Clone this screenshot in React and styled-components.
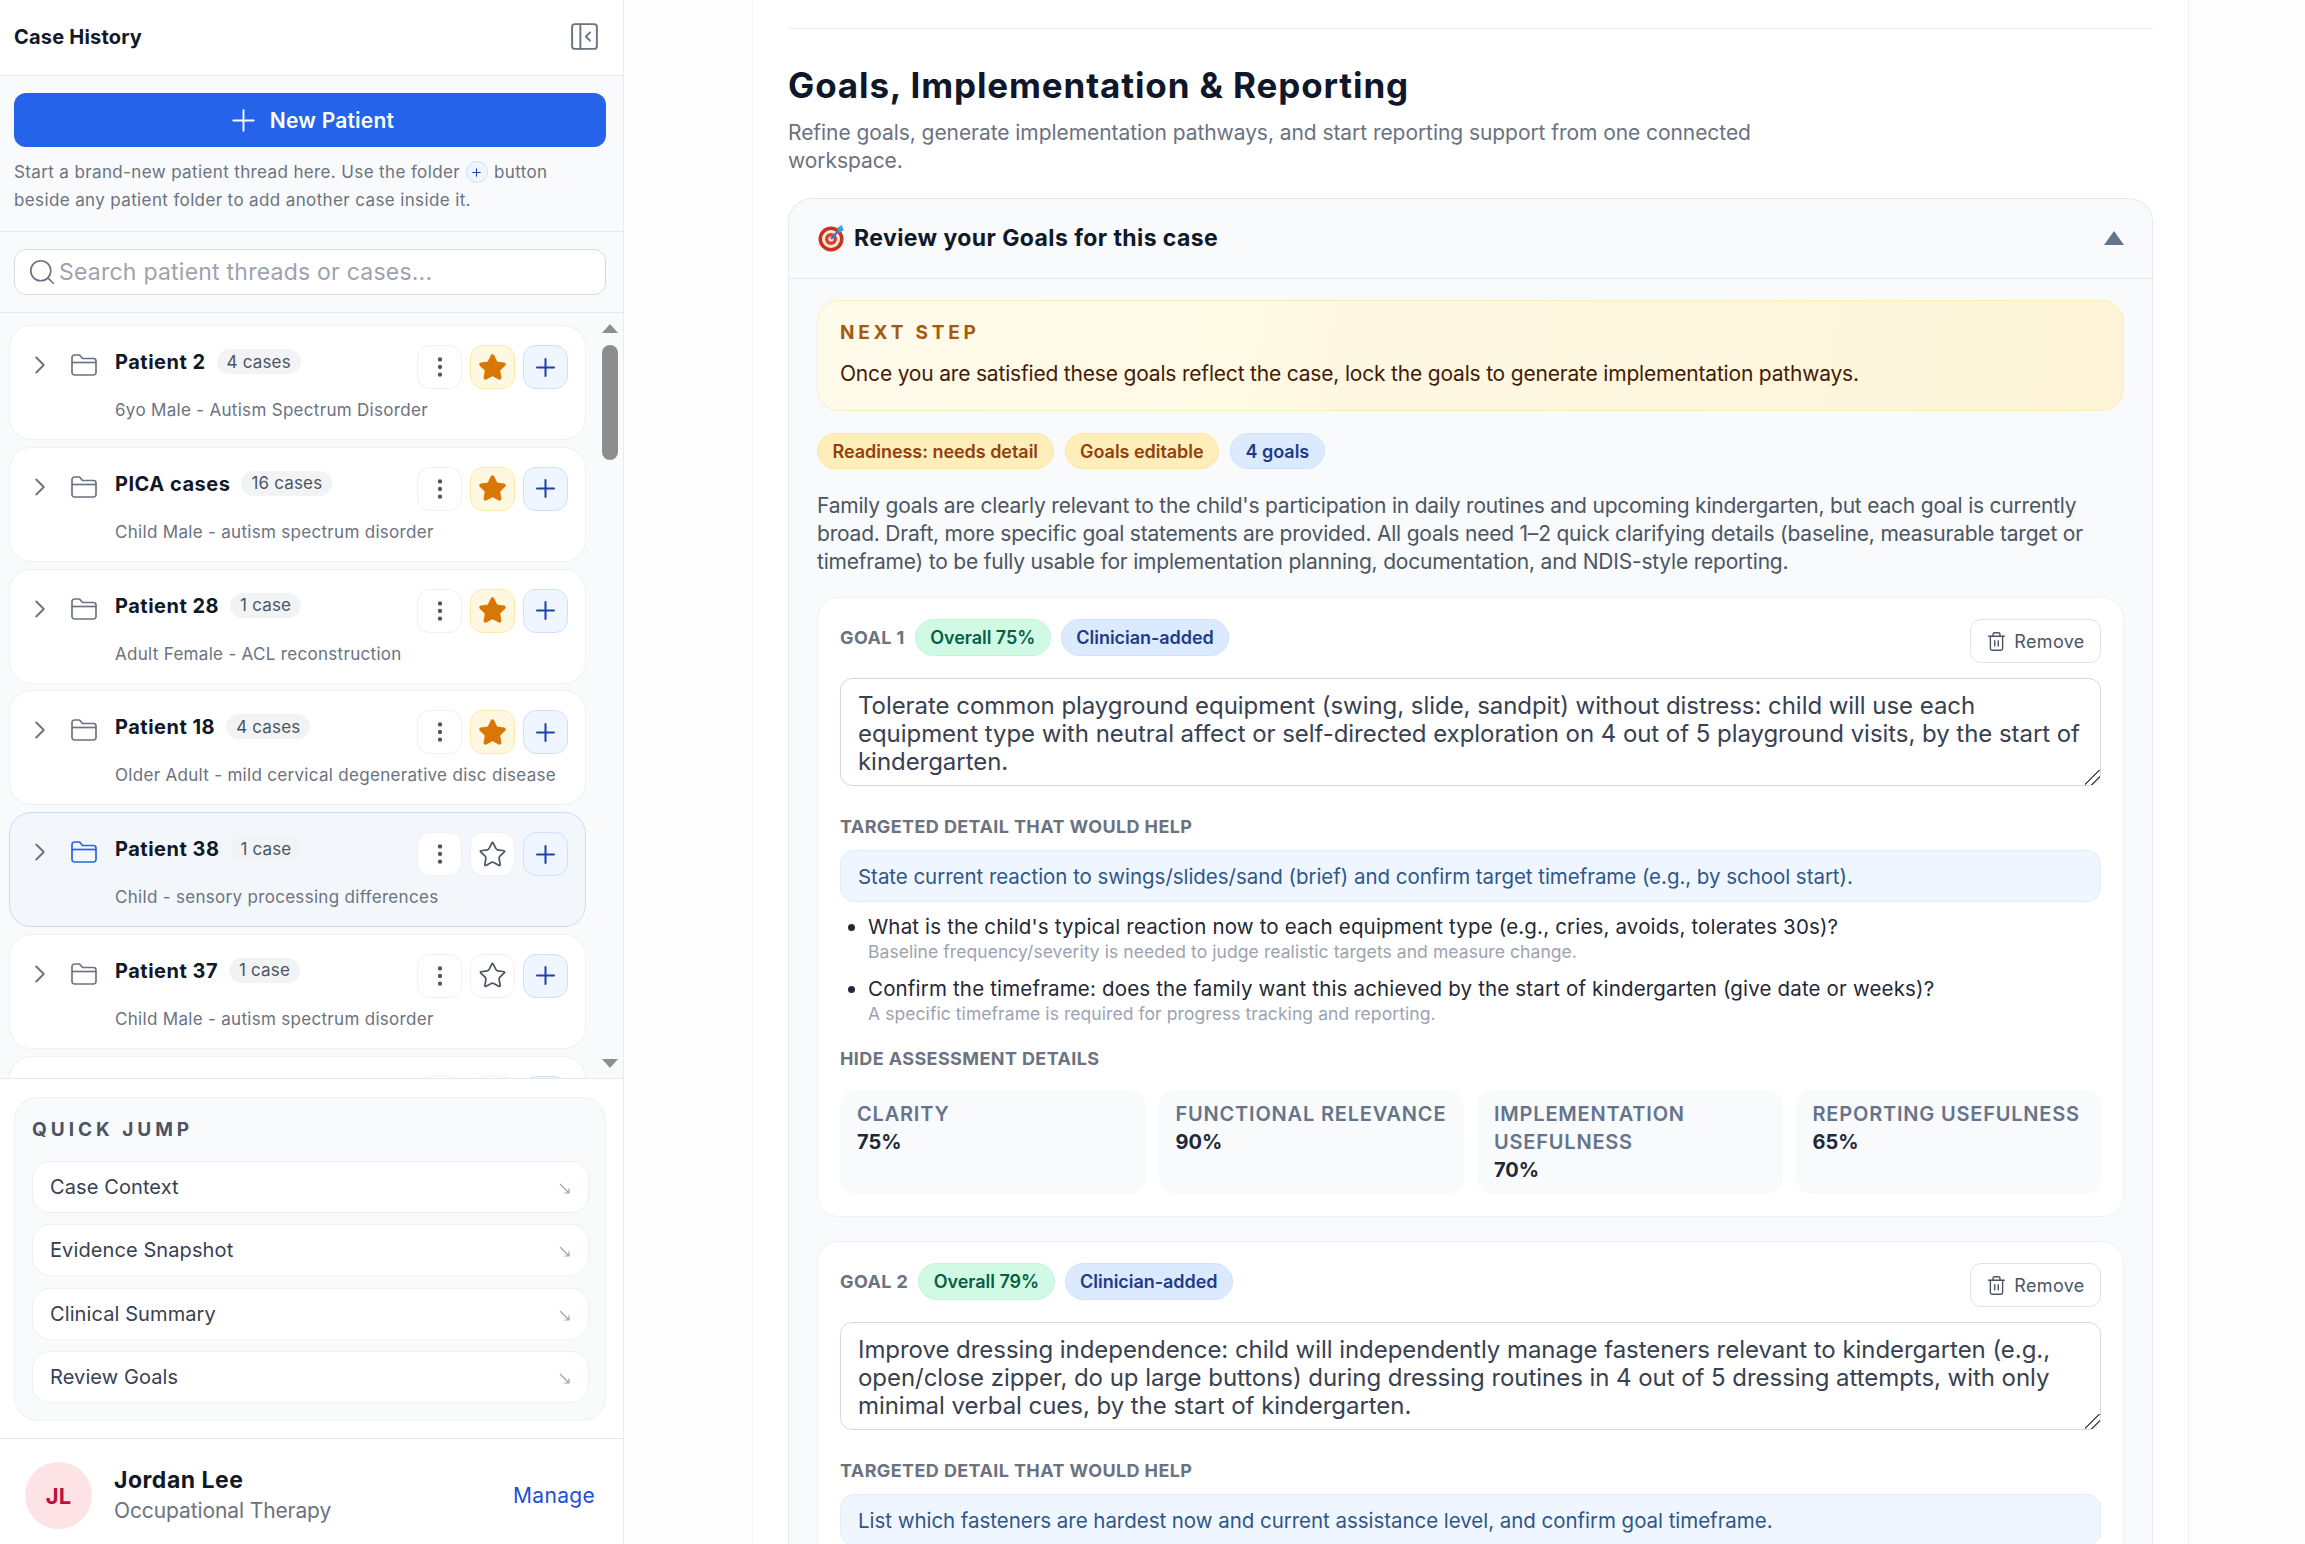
import React from "react";
import styled, { createGlobalStyle } from "styled-components";
import { ChevronRight, EllipsisVertical, PanelLeftClose, Plus, Search, Star, Trash2 } from "lucide-react";

const GlobalStyle = createGlobalStyle`
  * { box-sizing: border-box; }
  html, body { margin: 0; height: 100%; overflow: hidden; }
  body {
    font-family: Inter, "Liberation Sans", sans-serif;
    background: #fdfdfe;
    color: #111827;
  }
`;

const Shell = styled.div`
  display: flex;
  height: 100vh;
  overflow: hidden;
`;

/* sidebar */
const Sidebar = styled.aside`
  width: 624px;
  flex: none;
  display: flex;
  flex-direction: column;
  background: #fff;
  border-right: 1px solid #e8ebef;
`;

const SideHeader = styled.header`
  height: 76px;
  flex: none;
  display: flex;
  align-items: center;
  justify-content: space-between;
  padding: 0 22px 2px 14px;
  border-bottom: 1px solid #e5e7eb;
  color: #6b7280;
`;

const SideTitle = styled.h2`
  margin: 0;
  font-size: 20px;
  font-weight: 700;
  letter-spacing: 0.01em;
  color: #111827;
`;

const SideBlock = styled.div`
  flex: none;
  padding: 17px 17px 17px 14px;
  background: #f8fafc;
  border-bottom: 1px solid #e5e7eb;
`;

const NewButton = styled.button`
  width: 100%;
  height: 54px;
  display: flex;
  align-items: center;
  justify-content: center;
  gap: 9px;
  border: 0;
  border-radius: 12px;
  background: #2563eb;
  color: #fff;
  font: 600 21px Inter, sans-serif;
  letter-spacing: 0.01em;
`;

const Hint = styled.div`
  margin: 11px 0 0;
  font-size: 17px;
  letter-spacing: 0.022em;
  color: #6b7280;
`;

const HintLine = styled.div`
  height: 28px;
  display: flex;
  align-items: center;
  white-space: nowrap;
`;

const HintChip = styled.span`
  display: inline-flex;
  align-items: center;
  justify-content: center;
  width: 22px;
  height: 22px;
  margin: 0 6px;
  flex: none;
  border-radius: 50%;
  background: #eff6ff;
  border: 1px solid #cfe0f7;
  color: #1e40af;
`;

const SearchBox = styled.label`
  height: 46px;
  display: flex;
  align-items: center;
  padding: 0 12px;
  background: #fff;
  border: 1px solid #d7dce3;
  border-radius: 12px;
  color: #6b7280;
`;

const SearchInput = styled.input`
  flex: 1;
  min-width: 0;
  padding: 0 0 0 2px;
  border: 0;
  outline: 0;
  background: none;
  font: 400 23px Inter, sans-serif;
  letter-spacing: 0.01em;
  &::placeholder { color: #9ca3af; opacity: 1; }
`;

const ListArea = styled.div`
  flex: 1;
  min-height: 0;
  display: flex;
  background: #f8fafc;
  border-bottom: 1px solid #e5e7eb;
  overflow: hidden;
`;

const CardColumn = styled.div`
  width: 586px;
  flex: none;
  padding: 12px 0 0 9px;
  display: flex;
  flex-direction: column;
  gap: 6.8px;
  overflow: hidden;
`;

const PatientCard = styled.div`
  height: 115px;
  flex: none;
  padding: 19px 17px 0 15px;
  border-radius: 22px;
  background: ${(p) => (p.$active ? "#f3f7fc" : "#fff")};
  border: 1px solid ${(p) => (p.$active ? "#c9dcf2" : "#edf0f4")};
`;

const CardTop = styled.div`
  display: flex;
  align-items: flex-start;
`;

const Chevron = styled(ChevronRight)`
  flex: none;
  margin-top: 5px;
  color: #6b7280;
`;

const FolderMark = styled.svg`
  flex: none;
  margin: 9px 0 0 16px;
  color: ${(p) => (p.$active ? "#2563eb" : "#6b7280")};
`;

const PatientName = styled.span`
  margin: 2px 0 0 18px;
  font-size: 20px;
  line-height: 30px;
  font-weight: 700;
  letter-spacing: 0.025em;
  color: #111827;
`;

const CountBadge = styled.span`
  margin: 4px 0 0 11px;
  height: 25px;
  padding: 0 10px;
  display: inline-flex;
  align-items: center;
  border-radius: 999px;
  background: #f1f3f5;
  font-size: 17px;
  letter-spacing: 0.01em;
  color: #4b5563;
`;

const Actions = styled.div`
  margin-left: auto;
  display: flex;
  gap: 8px;
`;

const IconButton = styled.button`
  width: 45px;
  height: 44px;
  padding: 0;
  display: flex;
  align-items: center;
  justify-content: center;
  border-radius: 13px;
  background: ${(p) => (p.$tone === "star" ? "#fff8e1" : p.$tone === "plus" ? "#eff6ff" : "#fff")};
  border: 1px solid ${(p) => (p.$tone === "star" ? "#fde9a9" : p.$tone === "plus" ? "#cfe0f7" : "#eef0f3")};
  color: ${(p) => (p.$tone === "plus" ? "#1e40af" : p.$tone === "star" ? "#d97706" : "#4b5563")};
`;

const Subline = styled.div`
  margin: 9px 0 0 90px;
  font-size: 17px;
  line-height: 24px;
  letter-spacing: 0.018em;
  color: #6b7280;
  white-space: nowrap;
`;

const ScrollTrack = styled.div`
  width: 17px;
  margin-left: 15px;
  padding-top: 11px;
  display: flex;
  flex-direction: column;
  align-items: center;
`;

const ScrollUp = styled.span`
  width: 0;
  height: 0;
  border-left: 8px solid transparent;
  border-right: 8px solid transparent;
  border-bottom: 9px solid #8d8d8d;
`;

const ScrollThumb = styled.span`
  width: 16px;
  height: 115px;
  margin-top: 12px;
  border-radius: 8px;
  background: #8d8d8d;
`;

const ScrollDown = styled.span`
  width: 0;
  height: 0;
  margin-top: auto;
  margin-bottom: 10px;
  border-left: 8px solid transparent;
  border-right: 8px solid transparent;
  border-top: 9px solid #8d8d8d;
`;

const JumpWrap = styled.div`
  flex: none;
  padding: 18px 17px 17px 14px;
  border-bottom: 1px solid #e5e7eb;
`;

const JumpPanel = styled.nav`
  padding: 19px 16px 17px 17px;
  background: #f8fafc;
  border: 1px solid #edf0f4;
  border-radius: 24px;
`;

const JumpTitle = styled.div`
  font-size: 19px;
  line-height: 26px;
  font-weight: 700;
  letter-spacing: 0.21em;
  color: #4b5563;
  margin-bottom: 18px;
`;

const JumpList = styled.div`
  display: flex;
  flex-direction: column;
  gap: 11.5px;
`;

const JumpItem = styled.a`
  height: 52px;
  display: flex;
  align-items: center;
  justify-content: space-between;
  padding: 0 17px;
  background: #fff;
  border: 1px solid #edf0f4;
  border-radius: 18px;
  font-size: 20px;
  letter-spacing: 0.005em;
  color: #374151;
`;

const JumpArrow = styled.svg`
  flex: none;
  margin: 3px 1px 0 0;
  color: #9ca3af;
`;

const Account = styled.footer`
  height: 105px;
  flex: none;
  display: flex;
  align-items: center;
  padding: 8px 28px 0 25px;
`;

const Avatar = styled.div`
  width: 67px;
  height: 67px;
  flex: none;
  display: flex;
  align-items: center;
  justify-content: center;
  border-radius: 50%;
  background: #fde2e6;
  color: #be123c;
  font-size: 22px;
  font-weight: 700;
`;

const AccountText = styled.div`
  margin-left: 22px;
`;

const AccountName = styled.div`
  font-size: 23px;
  line-height: 30px;
  font-weight: 700;
  letter-spacing: 0.022em;
  color: #111827;
`;

const AccountRole = styled.div`
  margin-top: 1px;
  font-size: 21px;
  line-height: 30px;
  letter-spacing: -0.005em;
  color: #6b7280;
`;

const ManageLink = styled.a`
  margin-left: auto;
  font-size: 21px;
  letter-spacing: 0.015em;
  color: #1d4ed8;
`;

/* workspace */
const Workspace = styled.main`
  flex: 1;
  min-width: 0;
  padding: 0 116px 0 128px;
  overflow: hidden;
`;

const Panel = styled.div`
  min-height: 100%;
  padding: 28px 35px 0;
  background: #fff;
  border-left: 1px solid #f1f3f6;
  border-right: 1px solid #f1f3f6;
`;

const TopSection = styled.section`
  border-top: 1px solid #e8ebef;
  padding-top: 36px;
`;

const Heading = styled.h1`
  margin: 0;
  font-size: 35px;
  line-height: 40px;
  font-weight: 700;
  letter-spacing: 0.025em;
  color: #0f172a;
`;

const Intro = styled.p`
  margin: 14px 0 23px;
  max-width: 1010px;
  font-size: 21px;
  line-height: 28px;
  letter-spacing: -0.003em;
  color: #6b7280;
`;

const Accordion = styled.section`
  background: #f8fafc;
  border: 1px solid #e6eaf0;
  border-bottom: 0;
  border-radius: 24px 24px 0 0;
`;

const AccordionHead = styled.div`
  height: 80px;
  display: flex;
  align-items: center;
  gap: 9px;
  padding: 0 28px 2px 29px;
  border-bottom: 1px solid #e6eaf0;
`;

const AccordionTitle = styled.h3`
  margin: 0;
  font-size: 23px;
  font-weight: 700;
  color: #111827;
  letter-spacing: 0.018em;
`;

const CollapseMark = styled.span`
  margin-left: auto;
  width: 0;
  height: 0;
  border-left: 10px solid transparent;
  border-right: 10px solid transparent;
  border-bottom: 14px solid #64748b;
`;

const AccordionBody = styled.div`
  padding: 21px 28px 0;
`;

const NextStep = styled.div`
  height: 111px;
  padding: 20px 22px 0;
  border: 1px solid #fbeeb8;
  border-radius: 22px;
  background: linear-gradient(100deg, #fffbeb, #fdf4d8);
`;

const NextLabel = styled.div`
  font-size: 19px;
  line-height: 24px;
  font-weight: 700;
  letter-spacing: 0.2em;
  color: #a65a10;
`;

const NextText = styled.div`
  margin-top: 15px;
  font-size: 21px;
  line-height: 28px;
  letter-spacing: -0.009em;
  color: #451a03;
`;

const PillRow = styled.div`
  display: flex;
  align-items: center;
  gap: 11px;
  margin: 22px 0 23px;
`;

const Pill = styled.span`
  height: ${(p) => (p.$tall ? 37 : 36)}px;
  padding: 0 14.5px;
  display: inline-flex;
  align-items: center;
  border-radius: 999px;
  font-size: 18px;
  font-weight: 600;
  letter-spacing: -0.002em;
  white-space: nowrap;
  background: ${(p) => (p.$tone === "green" ? "#d1fae5" : p.$tone === "blue" ? "#dbeafe" : "#fdeeba")};
  color: ${(p) => (p.$tone === "green" ? "#065f46" : p.$tone === "blue" ? "#1e3a8a" : "#92400e")};
  border: 1px solid ${(p) => (p.$tone === "green" ? "#c4f5dc" : p.$tone === "blue" ? "#d2e2fa" : "#fbe7a4")};
`;

const Summary = styled.p`
  margin: 0 0 21px;
  font-size: 21px;
  line-height: 28px;
  letter-spacing: -0.01em;
  color: #4b5563;
`;

const GoalCard = styled.article`
  margin-bottom: 24px;
  padding: 21px 22px 22px;
  background: #fff;
  border: 1px solid #eef1f5;
  border-radius: 22px;
`;

const GoalHead = styled.div`
  display: flex;
  align-items: flex-start;
  gap: 10px;
`;

const GoalLabel = styled.span`
  font-size: 18px;
  line-height: 37px;
  font-weight: 700;
  letter-spacing: 0.022em;
  color: #6b7280;
`;

const RemoveButton = styled.button`
  margin-left: auto;
  width: 131px;
  height: 44px;
  padding: 0;
  display: flex;
  align-items: center;
  justify-content: center;
  gap: 7px;
  background: #fff;
  border: 1px solid #dfe3e8;
  border-radius: 11px;
  color: #4b5563;
  font: 400 18px Inter, sans-serif;
  letter-spacing: 0.02em;
`;

const GoalText = styled.textarea`
  display: block;
  width: 100%;
  height: 108px;
  margin-top: 15px;
  padding: 13px 17px;
  overflow: hidden;
  background: #fff;
  border: 1px solid #d5d9df;
  border-radius: 12px;
  outline: 0;
  font: 400 24px/28px Inter, sans-serif;
  letter-spacing: -0.002em;
  color: #374151;
  &::-webkit-resizer {
    background: linear-gradient(135deg, transparent 44%, #555 44%, #555 52%, transparent 52%, transparent 68%, #555 68%, #555 76%, transparent 76%);
  }
`;

const SectionLabel = styled.div`
  margin-top: ${(p) => p.$top}px;
  font-size: 18px;
  line-height: 24px;
  font-weight: 700;
  letter-spacing: 0.022em;
  color: #6b7280;
`;

const DetailBox = styled.div`
  height: 52px;
  margin-top: 11px;
  padding: 0 17px;
  display: flex;
  align-items: center;
  background: #eff6ff;
  border: 1px solid #e2edfb;
  border-radius: 14px;
  font-size: 20.5px;
  letter-spacing: -0.002em;
  color: #2f5688;
`;

const Questions = styled.ul`
  margin: 12px 0 0;
  padding: 0 0 0 28px;
`;

const Question = styled.li`
  margin-bottom: 13px;
  font-size: 20.5px;
  line-height: 26px;
  letter-spacing: 0.008em;
  color: #1f2937;
`;

const QuestionNote = styled.div`
  margin-top: 1px;
  font-size: 17.5px;
  line-height: 22px;
  letter-spacing: 0.004em;
  color: #9ca3af;
`;

const MetricGrid = styled.div`
  display: grid;
  grid-template-columns: repeat(4, 1fr);
  gap: 13px;
  margin-top: 19px;
`;

const MetricCard = styled.div`
  padding: 10px 17px;
  background: #f8fafc;
  border-radius: 16px;
  font-size: 20px;
  line-height: 28px;
`;

const MetricLabel = styled.div`
  font-weight: 600;
  letter-spacing: 0.04em;
  color: #64748b;
`;

const MetricValue = styled.div`
  font-weight: 700;
  color: #1f2937;
`;

function FolderIcon({ active }) {
  return (
    <FolderMark $active={active} width="26" height="22" viewBox="0 0 26 22" fill="none" stroke="currentColor" strokeWidth="1.7" strokeLinejoin="round">
      <path d="M1 3.5A2.5 2.5 0 0 1 3.5 1h5l3 3.5H22.5A2.5 2.5 0 0 1 25 7v11.5a2.5 2.5 0 0 1-2.5 2.5h-19A2.5 2.5 0 0 1 1 18.5Z" />
      <path d="M1 8.5h24" />
    </FolderMark>
  );
}

function TargetEmoji() {
  return (
    <svg width="27" height="28" viewBox="0 0 27 28">
      <circle cx="13" cy="15" r="12.5" fill="#c8321f" />
      <circle cx="13" cy="15" r="9" fill="#f3e6dc" />
      <circle cx="13" cy="15" r="6" fill="#d8402b" />
      <circle cx="13" cy="15" r="2.6" fill="#f3e6dc" />
      <path d="M13 15 22 5" stroke="#2f7fc4" strokeWidth="2.4" />
      <path d="M19 4l5-3 1 4 1 1-5 3Z" fill="#3fa0e6" />
    </svg>
  );
}

const patients = [
  { name: "Patient 2", count: "4 cases", sub: "6yo Male - Autism Spectrum Disorder", starred: true },
  { name: "PICA cases", count: "16 cases", sub: "Child Male - autism spectrum disorder", starred: true },
  { name: "Patient 28", count: "1 case", sub: "Adult Female - ACL reconstruction", starred: true },
  { name: "Patient 18", count: "4 cases", sub: "Older Adult - mild cervical degenerative disc disease", starred: true },
  { name: "Patient 38", count: "1 case", sub: "Child - sensory processing differences", active: true },
  { name: "Patient 37", count: "1 case", sub: "Child Male - autism spectrum disorder" },
  { name: "", count: "", sub: "" },
];

const jumps = ["Case Context", "Evidence Snapshot", "Clinical Summary", "Review Goals"];

const goals = [
  {
    label: "GOAL 1",
    overall: "Overall 75%",
    text: "Tolerate common playground equipment (swing, slide, sandpit) without distress: child will use each\nequipment type with neutral affect or self-directed exploration on 4 out of 5 playground visits, by the start of\nkindergarten.",
    detail: "State current reaction to swings/slides/sand (brief) and confirm target timeframe (e.g., by school start).",
    questions: [
      {
        q: "What is the child's typical reaction now to each equipment type (e.g., cries, avoids, tolerates 30s)?",
        note: "Baseline frequency/severity is needed to judge realistic targets and measure change.",
      },
      {
        q: "Confirm the timeframe: does the family want this achieved by the start of kindergarten (give date or weeks)?",
        note: "A specific timeframe is required for progress tracking and reporting.",
      },
    ],
    metrics: [
      ["CLARITY", "75%"],
      ["FUNCTIONAL RELEVANCE", "90%"],
      ["IMPLEMENTATION USEFULNESS", "70%"],
      ["REPORTING USEFULNESS", "65%"],
    ],
  },
  {
    label: "GOAL 2",
    overall: "Overall 79%",
    text: "Improve dressing independence: child will independently manage fasteners relevant to kindergarten (e.g.,\nopen/close zipper, do up large buttons) during dressing routines in 4 out of 5 dressing attempts, with only\nminimal verbal cues, by the start of kindergarten.",
    detail: "List which fasteners are hardest now and current assistance level, and confirm goal timeframe.",
    questions: [],
    metrics: [],
  },
];

function PatientRow({ patient }) {
  return (
    <PatientCard $active={patient.active}>
      <CardTop>
        <Chevron size={30} strokeWidth={1.5} />
        <FolderIcon active={patient.active} />
        <PatientName>{patient.name}</PatientName>
        {patient.count && <CountBadge>{patient.count}</CountBadge>}
        <Actions>
          <IconButton>
            <EllipsisVertical size={26} />
          </IconButton>
          <IconButton $tone={patient.starred ? "star" : undefined}>
            <Star size={29} strokeWidth={patient.starred ? 2 : 1.4} fill={patient.starred ? "currentColor" : "none"} />
          </IconButton>
          <IconButton $tone="plus">
            <Plus size={29} strokeWidth={1.7} />
          </IconButton>
        </Actions>
      </CardTop>
      <Subline>{patient.sub}</Subline>
    </PatientCard>
  );
}

function Goal({ goal }) {
  return (
    <GoalCard>
      <GoalHead>
        <GoalLabel>{goal.label}</GoalLabel>
        <Pill $tone="green" $tall>{goal.overall}</Pill>
        <Pill $tone="blue" $tall>Clinician-added</Pill>
        <RemoveButton>
          <Trash2 size={21} strokeWidth={1.6} />
          Remove
        </RemoveButton>
      </GoalHead>
      <GoalText readOnly wrap="off" defaultValue={goal.text} />
      <SectionLabel $top={29}>TARGETED DETAIL THAT WOULD HELP</SectionLabel>
      <DetailBox>{goal.detail}</DetailBox>
      {goal.questions.length > 0 && (
        <>
          <Questions>
            {goal.questions.map((item) => (
              <Question key={item.q}>
                {item.q}
                <QuestionNote>{item.note}</QuestionNote>
              </Question>
            ))}
          </Questions>
          <SectionLabel $top={22}>HIDE ASSESSMENT DETAILS</SectionLabel>
          <MetricGrid>
            {goal.metrics.map(([label, value]) => (
              <MetricCard key={label}>
                <MetricLabel>{label}</MetricLabel>
                <MetricValue>{value}</MetricValue>
              </MetricCard>
            ))}
          </MetricGrid>
        </>
      )}
    </GoalCard>
  );
}

export default function App() {
  return (
    <Shell>
      <GlobalStyle />
      <Sidebar>
        <SideHeader>
          <SideTitle>Case History</SideTitle>
          <PanelLeftClose size={33} strokeWidth={1.4} />
        </SideHeader>
        <SideBlock>
          <NewButton>
            <Plus size={35} strokeWidth={1.3} />
            New Patient
          </NewButton>
          <Hint>
            <HintLine>
              <span>Start a brand-new patient thread here. Use the folder</span>
              <HintChip>
                <Plus size={13} />
              </HintChip>
              <span>button</span>
            </HintLine>
            <HintLine>beside any patient folder to add another case inside it.</HintLine>
          </Hint>
        </SideBlock>
        <SideBlock>
          <SearchBox>
            <Search size={30} strokeWidth={1.3} />
            <SearchInput placeholder="Search patient threads or cases..." />
          </SearchBox>
        </SideBlock>
        <ListArea>
          <CardColumn>
            {patients.map((patient, i) => (
              <PatientRow key={i} patient={patient} />
            ))}
          </CardColumn>
          <ScrollTrack>
            <ScrollUp />
            <ScrollThumb />
            <ScrollDown />
          </ScrollTrack>
        </ListArea>
        <JumpWrap>
          <JumpPanel>
            <JumpTitle>QUICK JUMP</JumpTitle>
            <JumpList>
              {jumps.map((item) => (
                <JumpItem key={item}>
                  {item}
                  <JumpArrow width="11" height="11" viewBox="0 0 11 11" fill="none" stroke="currentColor" strokeWidth="1.2">
                    <path d="M1 1l9 9M10 5.5V10H5.5" />
                  </JumpArrow>
                </JumpItem>
              ))}
            </JumpList>
          </JumpPanel>
        </JumpWrap>
        <Account>
          <Avatar>JL</Avatar>
          <AccountText>
            <AccountName>Jordan Lee</AccountName>
            <AccountRole>Occupational Therapy</AccountRole>
          </AccountText>
          <ManageLink>Manage</ManageLink>
        </Account>
      </Sidebar>
      <Workspace>
        <Panel>
          <TopSection>
            <Heading>Goals, Implementation &amp; Reporting</Heading>
            <Intro>Refine goals, generate implementation pathways, and start reporting support from one connected workspace.</Intro>
            <Accordion>
              <AccordionHead>
                <TargetEmoji />
                <AccordionTitle>Review your Goals for this case</AccordionTitle>
                <CollapseMark />
              </AccordionHead>
              <AccordionBody>
                <NextStep>
                  <NextLabel>NEXT STEP</NextLabel>
                  <NextText>Once you are satisfied these goals reflect the case, lock the goals to generate implementation pathways.</NextText>
                </NextStep>
                <PillRow>
                  <Pill>Readiness: needs detail</Pill>
                  <Pill>Goals editable</Pill>
                  <Pill $tone="blue">4 goals</Pill>
                </PillRow>
                <Summary>
                  Family goals are clearly relevant to the child's participation in daily routines and upcoming kindergarten, but each goal is currently broad. Draft, more specific goal statements are provided. All goals need 1–2 quick clarifying details (baseline, measurable target or timeframe) to be fully usable for implementation planning, documentation, and NDIS-style reporting.
                </Summary>
                {goals.map((goal) => (
                  <Goal key={goal.label} goal={goal} />
                ))}
              </AccordionBody>
            </Accordion>
          </TopSection>
        </Panel>
      </Workspace>
    </Shell>
  );
}
